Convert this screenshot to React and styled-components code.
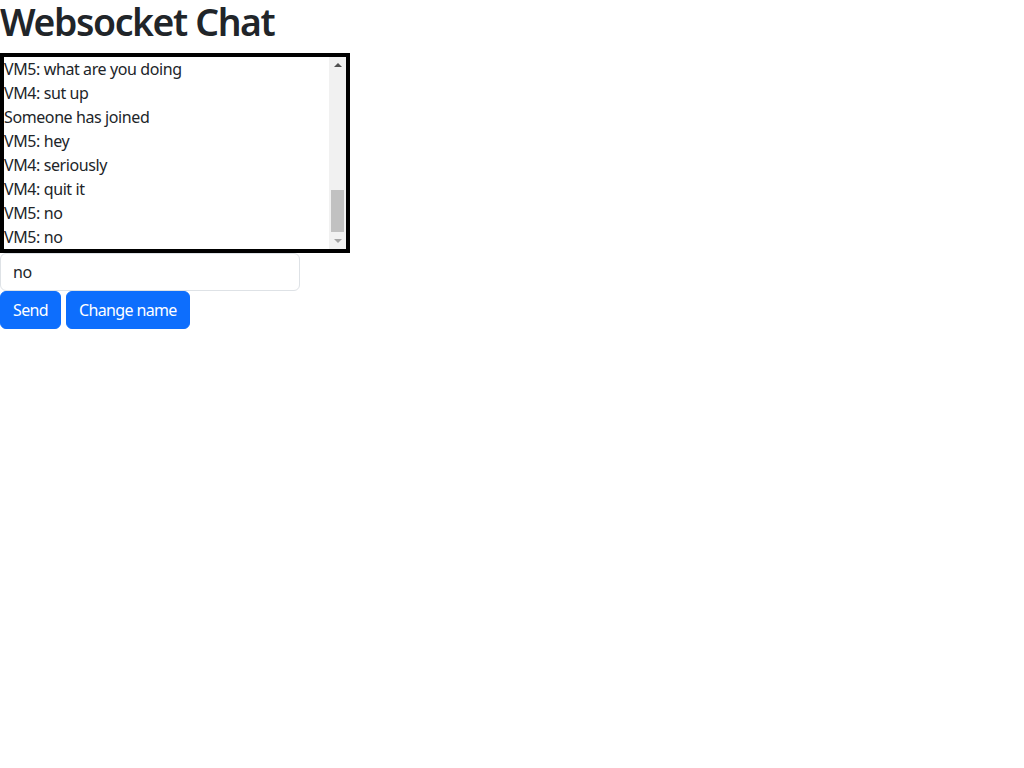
import React, { useLayoutEffect, useRef, useState } from 'react';
import styled, { createGlobalStyle } from 'styled-components';

const GlobalStyle = createGlobalStyle`
  body {
    margin: 0;
    font-family: "Noto Sans", "Liberation Sans", sans-serif;
    font-size: 16px;
    line-height: 1.5;
    letter-spacing: -0.025em;
    color: #212529;
    background: #fff;
  }
`;

const Page = styled.div`
  display: flex;
  flex-direction: column;
  align-items: flex-start;
`;

const Title = styled.h1`
  margin: 0 0 8px;
  font-size: 37.36px;
  font-weight: 600;
  line-height: 1.2;
  letter-spacing: -0.037em;
`;

const ChatBox = styled.div`
  box-sizing: border-box;
  display: flex;
  width: 350px;
  height: 200px;
  border: 4px solid #000;
`;

const MessageList = styled.div`
  flex: 1;
  overflow-y: auto;
  scrollbar-width: none;
  &::-webkit-scrollbar {
    display: none;
  }
`;

const Message = styled.div`
  white-space: nowrap;
`;

/* drawn stand-in for the Windows scrollbar in the screenshot */
const ScrollBar = styled.div`
  display: flex;
  flex-direction: column;
  width: 17px;
  background: #f1f1f1;
`;

const Arrow = styled.div`
  height: 17px;
  display: flex;
  align-items: center;
  justify-content: center;
  &::before {
    content: '';
    width: 0;
    height: 0;
    border-left: 4px solid transparent;
    border-right: 4px solid transparent;
    ${(p) =>
      p.$up
        ? `border-bottom: 4px solid ${p.$color}; margin-bottom: 1px;`
        : `border-top: 4px solid ${p.$color}; margin-top: 1px;`}
  }
`;

const Track = styled.div`
  flex: 1;
  display: flex;
  flex-direction: column;
  justify-content: flex-end;
  padding: 0 2px;
`;

const Thumb = styled.div`
  height: 42px;
  background: #c1c1c1;
`;

const Input = styled.input`
  box-sizing: border-box;
  width: 300px;
  height: 38px;
  padding: 6px 12px;
  font: inherit;
  letter-spacing: inherit;
  color: #212529;
  border: 1px solid #dee2e6;
  border-radius: 6px;
  outline: none;
`;

const Buttons = styled.div`
  display: flex;
  gap: 5px;
`;

const Button = styled.button`
  box-sizing: border-box;
  height: 38px;
  padding: 6px 12px;
  font: inherit;
  letter-spacing: -0.04em;
  color: #fff;
  background: #0d6efd;
  border: 1px solid #0d6efd;
  border-radius: 6px;
  cursor: pointer;
`;

const history = [
  'Someone has joined',
  'Someone has joined',
  'VM4: hello',
  'VM5: hi',
  'VM4: how are you',
  'VM5: good',
  'VM5: you?',
  'VM4: fine',
  'VM4: testing',
  'VM5: testing',
  'VM4: does it work',
  'VM5: yes',
  'VM4: nice',
  'VM5: nice',
  'VM4: ok',
  'VM5: ok',
  'VM4: stop',
  'VM5: no',
  'VM4: stop it',
  'VM5: why',
  'VM4: because',
  'VM5: lol',
  'VM5: what are you doing',
  'VM4: sut up',
  'Someone has joined',
  'VM5: hey',
  'VM4: seriously',
  'VM4: quit it',
  'VM5: no',
  'VM5: no',
];

export default function App() {
  const [messages] = useState(history);
  const [text, setText] = useState('no');
  const listRef = useRef(null);

  useLayoutEffect(() => {
    const el = listRef.current;
    if (el) el.scrollTop = el.scrollHeight;
  }, [messages]);

  return (
    <Page>
      <GlobalStyle />
      <Title>Websocket Chat</Title>
      <ChatBox>
        <MessageList ref={listRef}>
          {messages.map((m, i) => (
            <Message key={i}>{m}</Message>
          ))}
        </MessageList>
        <ScrollBar>
          <Arrow $up $color="#505050" />
          <Track>
            <Thumb />
          </Track>
          <Arrow $color="#a3a3a3" />
        </ScrollBar>
      </ChatBox>
      <Input value={text} onChange={(e) => setText(e.target.value)} />
      <Buttons>
        <Button>Send</Button>
        <Button>Change name</Button>
      </Buttons>
    </Page>
  );
}
